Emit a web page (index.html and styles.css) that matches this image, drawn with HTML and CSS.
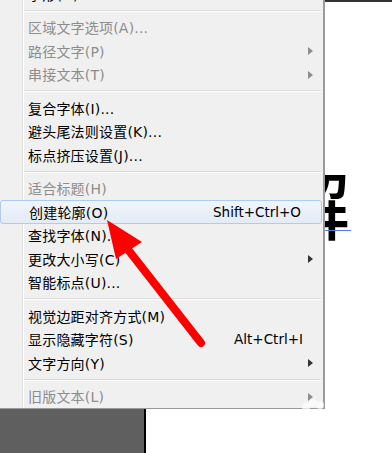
FILE: index.html
```html
<!DOCTYPE html>
<html lang="zh">
<head>
  <meta charset="UTF-8" />
  <meta name="viewport" content="width=device-width, initial-scale=1.0"/>
  <title>文字菜单</title>
  <link rel="stylesheet" href="styles.css">
</head>
<body>
  <div class="screen">
    <div class="left">
      <div class="menu">
        <div class="item"><span class="label">字形(G)</span></div>
        <div class="sep"></div>
        <div class="item off"><span class="label">区域文字选项(A)...</span></div>
        <div class="item off sub"><span class="label">路径文字(P)</span></div>
        <div class="item off sub"><span class="label">串接文本(T)</span></div>
        <div class="sep"></div>
        <div class="item"><span class="label">复合字体(I)...</span></div>
        <div class="item"><span class="label">避头尾法则设置(K)...</span></div>
        <div class="item"><span class="label">标点挤压设置(J)...</span></div>
        <div class="sep"></div>
        <div class="item off"><span class="label">适合标题(H)</span></div>
        <div class="item hover"><span class="label">创建轮廓(O)</span><span class="keys">Shift+Ctrl+O</span></div>
        <div class="item"><span class="label">查找字体(N)...</span></div>
        <div class="item sub"><span class="label">更改大小写(C)</span></div>
        <div class="item"><span class="label">智能标点(U)...</span></div>
        <div class="sep"></div>
        <div class="item"><span class="label">视觉边距对齐方式(M)</span></div>
        <div class="item"><span class="label">显示隐藏字符(S)</span><span class="keys">Alt+Ctrl+I</span></div>
        <div class="item sub"><span class="label">文字方向(Y)</span></div>
        <div class="sep"></div>
        <div class="item off sub"><span class="label">旧版文本(L)</span></div>
      </div>
      <div class="floor"><div class="panel"></div></div>
    </div>

    <div class="canvas">
      <span class="glyph">解</span>
      <i class="baseline"></i>
    </div>

    <svg class="pointer" width="392" height="453" viewBox="0 0 392 453">
      <line x1="201" y1="343" x2="126" y2="247" stroke="#ff0000" stroke-width="8" stroke-linecap="round"/>
      <polygon points="107,220 142,242 116,259" fill="#ff0000"/>
      <g fill="#ffffff" opacity="0.7">
        <circle cx="306" cy="407" r="4"/>
        <circle cx="313" cy="403" r="4"/>
        <circle cx="320" cy="405" r="4"/>
      </g>
    </svg>
  </div>
</body>
</html>
```

FILE: styles.css
```css
body {
  margin: 0;
  padding: 0;
  background-color: #fff;
  font-family: "DejaVu Sans", "Noto Sans CJK SC", sans-serif;
}

.screen {
  position: relative;
  display: flex;
  width: 392px;
  height: 453px;
  overflow: hidden;
}

.left {
  width: 325px;
  display: flex;
  flex-direction: column;
  position: relative;
  z-index: 2;
}

.menu {
  margin-top: -18px;
  background-color: #f0f0f0;
  background-image: linear-gradient(#e2e3e3, #e2e3e3), linear-gradient(#fff, #fff);
  background-size: 1px 100%, 1px 100%;
  background-position: 22px 0, 23px 0;
  background-repeat: no-repeat;
  border-right: 2px solid #9a9a9a;
  border-bottom: 1px solid #9a9a9a;
}

.item {
  height: 23.5px;
  display: flex;
  align-items: center;
  padding-left: 28px;
  font-size: 14px;
  color: #000;
  box-sizing: border-box;
  position: relative;
}

.item .label {
  flex: 1;
  white-space: nowrap;
  letter-spacing: 0.2px;
}

.item .keys {
  font-family: "DejaVu Sans", sans-serif;
  font-size: 13.5px;
  margin-right: 20px;
}

.item.off {
  color: #8d8d8d;
}

.item.sub::after {
  content: "";
  position: absolute;
  right: 10px;
  top: 8px;
  border-left: 5px solid #333;
  border-top: 4px solid transparent;
  border-bottom: 4px solid transparent;
}

.item.off.sub::after {
  border-left-color: #8d8d8d;
}

.item.hover {
  margin-right: 1px;
  border: 1px solid #aecbf1;
  border-radius: 3px;
  background: linear-gradient(#f1f5fb, #e3ebf7);
}

.sep {
  margin: 4px 2px 4px 24px;
  border-top: 1px solid #dcdcdc;
  border-bottom: 1px solid #fff;
}

.floor {
  flex: 1;
  background-color: #fff;
}

.panel {
  width: 144px;
  height: 100%;
  background-color: #5f5f5f;
  border-right: 2px solid #000;
}

.canvas {
  flex: 1;
  position: relative;
  background-color: #fff;
  border-top: 2px solid #333;
}

.glyph {
  position: absolute;
  left: -49px;
  top: 163px;
  font-family: "Noto Sans CJK SC", sans-serif;
  font-size: 74px;
  line-height: 1;
  font-weight: 500;
  color: #000;
}

.baseline {
  position: absolute;
  left: 0;
  top: 228px;
  width: 26px;
  height: 1px;
  background-color: #4a7fe0;
}

.pointer {
  position: absolute;
  left: 0;
  top: 0;
  z-index: 3;
}
```
